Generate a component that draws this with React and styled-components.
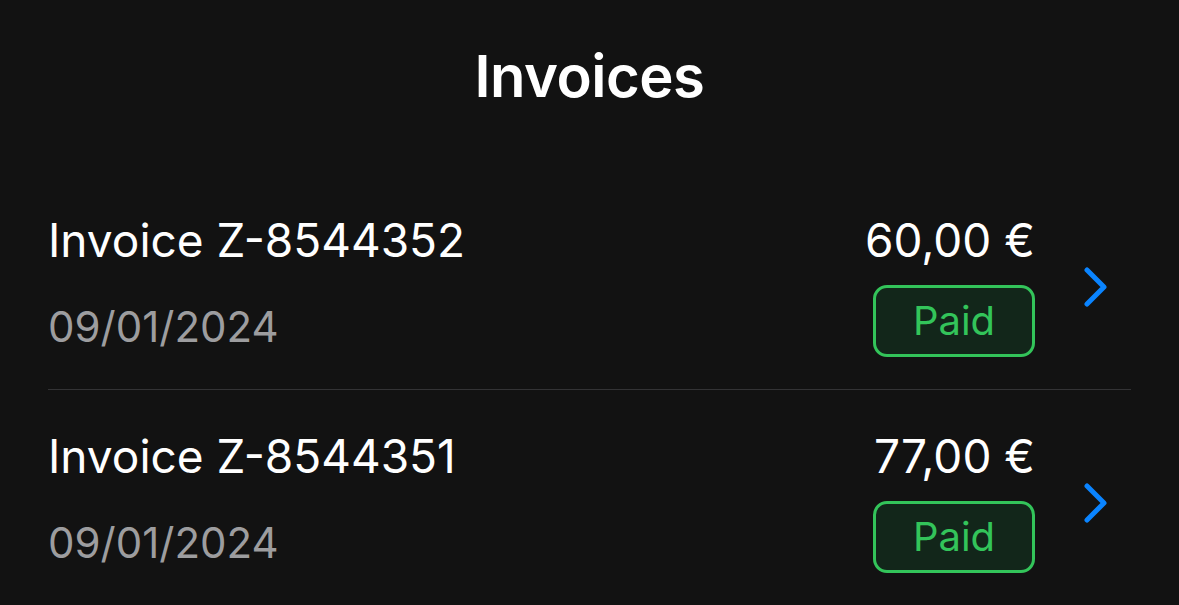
import styled, { createGlobalStyle } from 'styled-components';

const GlobalStyle = createGlobalStyle`
  html, body {
    margin: 0;
    padding: 0;
    background: #121212;
  }
  body {
    font-family: 'Inter', 'Noto Sans', sans-serif;
    color: #ffffff;
    -webkit-font-smoothing: antialiased;
  }
`;

const Screen = styled.div`
  min-height: 605px;
  background: #121212;
  padding: 47px 48px 0;
  box-sizing: border-box;
`;

const Title = styled.h1`
  margin: 0 0 69px;
  text-align: center;
  font-size: 58px;
  line-height: 58px;
  font-weight: 600;
  letter-spacing: -0.5px;
`;

const List = styled.ul`
  list-style: none;
  margin: 0;
  padding: 0;
`;

const Row = styled.li`
  display: flex;
  align-items: flex-start;
  padding: 43px 24px 32px 0;
  border-bottom: 1px solid ${props => (props.$last ? 'transparent' : '#333335')};
`;

const Details = styled.div`
  flex: 1;
  display: flex;
  flex-direction: column;
  gap: 43px;
`;

const Name = styled.div`
  font-size: 46px;
  line-height: 46px;
  font-weight: 400;
`;

const DateText = styled.div`
  font-size: 42px;
  line-height: 42px;
  color: #9d9d9f;
`;

const Summary = styled.div`
  display: flex;
  flex-direction: column;
  align-items: flex-end;
  gap: 22px;
`;

const Amount = styled.div`
  font-size: 46px;
  line-height: 46px;
`;

const Badge = styled.div`
  width: 162px;
  height: 72px;
  box-sizing: border-box;
  display: flex;
  align-items: center;
  justify-content: center;
  border: 3px solid #33c45a;
  border-radius: 14px;
  background: #12261a;
  color: #33c45a;
  font-size: 40px;
  line-height: 40px;
`;

const Chevron = styled.svg`
  align-self: center;
  width: 24px;
  height: 40px;
  margin-left: 48px;
  flex: none;
`;

const invoices = [
  { id: 'Z-8544352', date: '09/01/2024', amount: '60,00 €', status: 'Paid' },
  { id: 'Z-8544351', date: '09/01/2024', amount: '77,00 €', status: 'Paid' },
];

export default function App() {
  return (
    <>
      <GlobalStyle />
      <Screen>
        <Title>Invoices</Title>
        <List>
          {invoices.map((inv, i) => (
            <Row key={inv.id} $last={i === invoices.length - 1}>
              <Details>
                <Name>Invoice {inv.id}</Name>
                <DateText>{inv.date}</DateText>
              </Details>
              <Summary>
                <Amount>{inv.amount}</Amount>
                <Badge>{inv.status}</Badge>
              </Summary>
              <Chevron viewBox="0 0 24 40" fill="none">
                <path
                  d="M4 3 L21 20 L4 37"
                  stroke="#0a84ff"
                  strokeWidth="5"
                  strokeLinecap="round"
                  strokeLinejoin="round"
                />
              </Chevron>
            </Row>
          ))}
        </List>
      </Screen>
    </>
  );
}
